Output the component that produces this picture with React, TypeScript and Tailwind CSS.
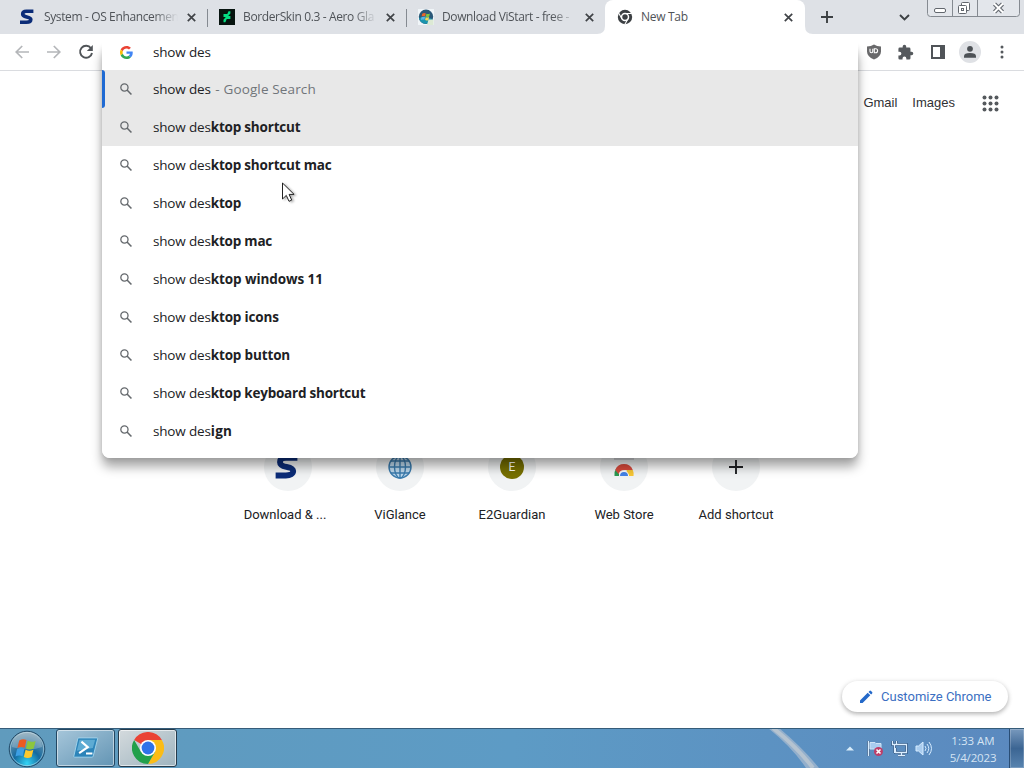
import type { ReactNode } from "react";

const suggestions = [
  { typed: "show des", rest: "ktop shortcut", tracking: "tracking-[-0.2px]" },
  { typed: "show des", rest: "ktop shortcut mac", tracking: "tracking-[-0.2px]" },
  { typed: "show des", rest: "ktop", tracking: "tracking-[-0.2px]" },
  { typed: "show des", rest: "ktop mac", tracking: "tracking-[-0.2px]" },
  { typed: "show des", rest: "ktop windows 11", tracking: "tracking-[-0.08px]" },
  { typed: "show des", rest: "ktop icons", tracking: "tracking-[-0.15px]" },
  { typed: "show des", rest: "ktop button", tracking: "tracking-[-0.15px]" },
  { typed: "show des", rest: "ktop keyboard shortcut", tracking: "tracking-[-0.22px]" },
  { typed: "show des", rest: "ign", tracking: "tracking-[0.3px]" },
];

function SLogo({ size }: { size: number }) {
  return (
    <svg width={size} height={size} viewBox="0 0 16 16" className="shrink-0">
      <path
        d="M14.4 2.3H7.4C5 2.3 3.7 3.3 3.7 5c0 1.9 1.5 2.4 4 2.9 2.5.5 4.1 1.1 4.1 2.6 0 1.6-1.7 2.7-4.5 2.7H1"
        fill="none"
        stroke="#0b2c78"
        strokeWidth="3.6"
      />
    </svg>
  );
}

function DeviantLogo() {
  return (
    <svg width="16" height="16" viewBox="0 0 16 16" className="shrink-0">
      <rect width="16" height="16" fill="#07140f" />
      <path
        d="M11.4 2.2v2.4L9.2 7h2.2v3H7.7l-1.3 3.2H4.5v-2.5L6.8 8H4.5V5h3.8l1.2-2.8Z"
        fill="#06dd83"
      />
    </svg>
  );
}

function ViStartLogo() {
  return (
    <svg width="16" height="16" viewBox="0 0 16 16" className="shrink-0">
      <rect width="16" height="16" fill="#f0f5f8" />
      <circle cx="8" cy="7.8" r="7.2" fill="#2b5878" />
      <path d="M1 9a7.2 7.2 0 0 0 13.7 1.3L8 7Z" fill="#1994ae" />
      <path d="M4.2 4.8q1.8-1.2 3.6-.3L7.2 7.4q-1.8-.8-3.6.2Z" fill="#e9652b" />
      <path d="M8.4 4.7q1.8.7 3.5-.2l-.7 2.9q-1.7.9-3.4.2Z" fill="#83c341" />
      <path d="M3.4 8.2q1.8-1 3.6-.2l-.6 2.8q-1.8-.8-3.5.2Z" fill="#58b5e8" />
      <path d="M7.7 8.3q1.7.7 3.4-.2l-.6 2.8q-1.7.9-3.4.2Z" fill="#f6d553" />
      <path d="M10.5 10.5h5V16H9Z" fill="#dce9d4" />
    </svg>
  );
}

function ChromeMono() {
  return (
    <svg width="16" height="16" viewBox="0 0 16 16" className="shrink-0">
      <circle cx="8" cy="8" r="7.2" fill="#3c4043" />
      <g stroke="#fff" strokeWidth="1.1" fill="none">
        <circle cx="8" cy="8" r="3.5" strokeWidth="1.5" />
        <path d="M8 4.5h6.8M4.97 9.75 1.6 3.9M11.03 9.75l-3.4 5.9" />
      </g>
    </svg>
  );
}

function ChromeColor({ size }: { size: number }) {
  return (
    <svg width={size} height={size} viewBox="0 0 48 48" className="shrink-0">
      <path d="M24 24 3.2 12A24 24 0 0 1 44.8 12Z" fill="#ea4335" />
      <path d="M24 12h20.8A24 24 0 0 1 24 48l10.4-18Z" fill="#fbbc16" />
      <path d="M3.2 12A24 24 0 0 0 24 48l10.4-18H13.6Z" fill="#22a04b" />
      <circle cx="24" cy="24" r="12" fill="#fff" />
      <circle cx="24" cy="24" r="9.6" fill="#2f73e8" />
    </svg>
  );
}

function GoogleG() {
  return (
    <svg width="13" height="13" viewBox="0 0 48 48" className="shrink-0">
      <path fill="#EA4335" d="M24 9.5c3.5 0 6.7 1.2 9.2 3.6l6.9-6.9C35.9 2.4 30.5 0 24 0 14.6 0 6.5 5.4 2.6 13.2l8 6.2C12.4 13.7 17.7 9.5 24 9.5z" />
      <path fill="#4285F4" d="M47 24.6c0-1.6-.2-3.1-.4-4.6H24v9h12.9c-.6 3-2.3 5.5-4.8 7.2l7.7 6C44.4 38 47 31.8 47 24.6z" />
      <path fill="#FBBC05" d="M10.5 28.6c-.5-1.5-.8-3-.8-4.6s.3-3.1.8-4.6l-8-6.2C.9 16.5 0 20.1 0 24s.9 7.5 2.6 10.8z" />
      <path fill="#34A853" d="M24 48c6.5 0 11.9-2.1 15.9-5.8l-7.7-6c-2.2 1.4-4.9 2.3-8.2 2.3-6.3 0-11.6-4.2-13.5-9.9l-8 6.2C6.5 42.6 14.6 48 24 48z" />
    </svg>
  );
}

function SearchIcon() {
  return (
    <svg width="12" height="12" viewBox="0 0 13 13" fill="none" stroke="#65696d" className="shrink-0">
      <circle cx="4.8" cy="4.8" r="3.9" strokeWidth="1.4" />
      <path d="m7.6 7.6 4.8 4.8" strokeWidth="1.7" />
    </svg>
  );
}

function CloseIcon() {
  return (
    <svg width="9" height="9" viewBox="0 0 9 9" stroke="#404347" strokeWidth="1.7" className="shrink-0">
      <path d="m.8.8 7.4 7.4M8.2.8.8 8.2" />
    </svg>
  );
}

function Tab({ icon, title, className, titleClass }: { icon: ReactNode; title: string; className: string; titleClass: string }) {
  return (
    <div className={`flex h-[34px] shrink-0 items-center ${className}`}>
      {icon}
      <span
        className={`w-[134px] whitespace-nowrap text-[12px] tracking-[-0.37px] text-[#4f5358] mask-r-from-82% mask-r-to-100% ${titleClass}`}
      >
        {title}
      </span>
      <span className="ml-[9px] flex">
        <CloseIcon />
      </span>
    </div>
  );
}

function TabStrip() {
  return (
    <div className="flex h-[34px] shrink-0 items-center bg-[#dee1e6]">
      <Tab icon={<SLogo size={16} />} title="System - OS Enhancemen" className="w-[198px] pl-[19px]" titleClass="ml-[9px]" />
      <Tab icon={<DeviantLogo />} title="BorderSkin 0.3 - Aero Gla" className="w-[199px] pl-[21px]" titleClass="ml-2" />
      <Tab icon={<ViStartLogo />} title="Download ViStart - free -" className="w-[208px] pl-[21px]" titleClass="ml-2" />
      <div className="relative flex h-[34px] w-[200px] shrink-0 items-center rounded-t-lg bg-white pl-3">
        <svg width="216" height="8" viewBox="0 0 216 8" className="absolute bottom-0 -left-2" fill="#fff">
          <path d="M0 8Q8 8 8 0v8ZM208 0q0 8 8 8h-8Z" />
        </svg>
        <ChromeMono />
        <span className="ml-2 text-[12px] tracking-[-0.3px] text-[#4f5358]">New Tab</span>
        <span className="mr-3 ml-auto">
          <CloseIcon />
        </span>
      </div>
      <svg width="12" height="12" viewBox="0 0 12 12" stroke="#3c4043" strokeWidth="1.9" className="ml-4 shrink-0">
        <path d="M6 0v12M0 6h12" />
      </svg>
      <svg width="11" height="7" viewBox="0 0 11 7" fill="none" stroke="#3c4043" strokeWidth="1.9" className="ml-[66px] shrink-0">
        <path d="m1 1 4.5 4.5L10 1" />
      </svg>
      <svg width="94" height="17" viewBox="0 0 94 17" fill="none" className="mr-[3px] ml-auto self-start">
        <path d="M.5 0v13.500q0 3 3 3h86q3 0 3-3V0M25.500 0v16.500M50.500 0v16.500" fill="#e3e6eb" stroke="#858a91" />
        <rect x="7.5" y="8.5" width="11" height="4" rx="1.5" fill="#fff" stroke="#62676e" />
        <rect x="34.5" y="2.5" width="8" height="8" rx="1" fill="#fff" stroke="#62676e" />
        <rect x="31.5" y="5.5" width="8" height="8" rx="1" fill="#fff" stroke="#62676e" />
        <rect x="34.5" y="8.5" width="2" height="2" stroke="#62676e" />
        <path d="m67.5 4 8 8m0-8-8 8" stroke="#62676e" strokeWidth="4.2" />
        <path d="m67 3.5 9 9m0-9-9 9" stroke="#fff" strokeWidth="2" />
      </svg>
    </div>
  );
}

function Toolbar() {
  return (
    <div className="flex h-[37px] shrink-0 items-center border-b border-[#dadce0] bg-white pl-[15px]">
      <svg width="14" height="14" viewBox="0 0 14 14" fill="none" stroke="#b4b6b9" strokeWidth="1.7">
        <path d="M14 7H1.5M7.2 1 1.2 7l6 6" />
      </svg>
      <svg width="14" height="14" viewBox="0 0 14 14" fill="none" stroke="#b4b6b9" strokeWidth="1.7" className="ml-[18px]">
        <path d="M0 7h12.5M6.8 1l6 6-6 6" />
      </svg>
      <svg width="16" height="16" viewBox="0 0 16 16" fill="none" className="ml-[17px]">
        <path d="M13 4.300A6 6 0 1 0 14 9" stroke="#505458" strokeWidth="1.9" />
        <path d="M14.8 1v6h-6Z" fill="#505458" />
      </svg>
      <div className="mr-[19px] ml-auto flex items-center">
        <svg width="16" height="16" viewBox="0 0 16 16">
          <path d="M8 .4q2.8 1.9 7 2.1v5q0 5-7 8.100-7-3.100-7-8.100v-5Q5.200 2.300 8 .4Z" fill="#69696b" />
          <path d="M4 4.800v2.500q0 1.500 1.400 1.500t1.400-1.500V4.800M8.300 4.800v4h1.300a2 2 0 0 0 0-4Z" fill="none" stroke="#fff" strokeWidth="1.1" />
        </svg>
        <svg width="17" height="17" viewBox="0 0 24 24" fill="#55595d" className="ml-[15px]">
          <path d="M20.5 11H19V7a2 2 0 0 0-2-2h-4V3.500a2.500 2.500 0 0 0-5 0V5H4a2 2 0 0 0-2 2v3.800h1.500a2.700 2.700 0 0 1 0 5.400H2V20a2 2 0 0 0 2 2h3.800v-1.500a2.700 2.700 0 0 1 5.400 0V22H17a2 2 0 0 0 2-2v-4h1.500a2.500 2.500 0 0 0 0-5Z" />
        </svg>
        <svg width="14" height="14" viewBox="0 0 14 14" className="ml-[17px]">
          <path d="M1 1h12v12H1Z" fill="#fff" stroke="#505458" strokeWidth="2" />
          <path d="M9 1h4v12H9Z" fill="#505458" />
        </svg>
        <svg width="22" height="22" viewBox="0 0 22 22" className="ml-[14px]">
          <circle cx="11" cy="11" r="11" fill="#dfe1e5" />
          <circle cx="11" cy="7.8" r="2.9" fill="#4d5156" />
          <path d="M5 16.800v-1.500Q5 12 11 12t6 3.300v1.500Z" fill="#4d5156" />
        </svg>
        <svg width="6" height="14" viewBox="0 0 6 14" fill="#55595d" className="ml-[18px]">
          <circle cx="3" cy="2" r="1.5" />
          <circle cx="3" cy="7" r="1.5" />
          <circle cx="3" cy="12" r="1.5" />
        </svg>
      </div>
    </div>
  );
}

function Shortcut({ label, children, shift = "" }: { label: string; children: ReactNode; shift?: string }) {
  return (
    <div className="flex w-28 flex-col items-center">
      <div className="flex size-12 items-center justify-center rounded-full bg-[#f1f3f4]">{children}</div>
      <span className={`mt-[14px] font-[Roboto,sans-serif] text-[13px] leading-5 whitespace-nowrap text-[#202124] ${shift}`}>
        {label}
      </span>
    </div>
  );
}

function NewTabPage() {
  return (
    <div className="flex flex-1 flex-col bg-white">
      <div className="flex h-16 items-center justify-end pr-[25px] font-['Liberation_Sans',Arial,sans-serif] text-[13px] text-[#303134]">
        <span>Gmail</span>
        <span className="ml-[15px]">Images</span>
        <svg width="17" height="17" viewBox="0 0 17 17" fill="#55595d" className="ml-[27px]">
          {[2.5, 8.5, 14.5].map((y) =>
            [2.5, 8.5, 14.5].map((x) => <circle key={`${x}-${y}`} cx={x} cy={y} r="2" />)
          )}
        </svg>
      </div>
      <div className="mt-[308px] ml-[232px] flex">
        <Shortcut label="Download & ..." shift="-ml-1.5">
          <span className="-ml-0.5 flex">
            <SLogo size={26} />
          </span>
        </Shortcut>
        <Shortcut label="ViGlance">
          <svg width="24" height="24" viewBox="0 0 24 24" fill="none" stroke="#3b7cae" strokeWidth="1.4">
            <circle cx="12" cy="12" r="11" fill="#bdd9ed" />
            <ellipse cx="12" cy="12" rx="5.5" ry="11" />
            <path d="M12 1v22M1 12h22M3 6h18M3 18h18" />
          </svg>
        </Shortcut>
        <Shortcut label="E2Guardian">
          <span className="flex size-6 items-center justify-center rounded-full bg-[#777000] font-[Roboto,sans-serif] text-[12px] text-white">
            E
          </span>
        </Shortcut>
        <Shortcut label="Web Store">
          <svg width="24" height="24" viewBox="0 0 24 24">
            <path d="M2 1h20v4H2Z" fill="#d1d3d6" />
            <path d="M2.5 21a9.5 9.5 0 0 1 1.7-7.500L8 21Z" fill="#2b9a51" />
            <path d="M3.2 15a9.500 9.500 0 0 1 17.600 0H12a6 6 0 0 0-5.400 4Z" fill="#d94b3d" />
            <path d="M14.5 15h6.300a10 10 0 0 1 .7 6H16Z" fill="#f8c735" />
            <path d="M7 21a5 5 0 0 1 10 0Z" fill="#fff" />
            <path d="M8 21a4 4 0 0 1 8 0Z" fill="#4482e8" />
          </svg>
        </Shortcut>
        <Shortcut label="Add shortcut">
          <svg width="14" height="14" viewBox="0 0 14 14" stroke="#202124" strokeWidth="1.9">
            <path d="M7 0v14M0 7h14" />
          </svg>
        </Shortcut>
      </div>
      <button className="mt-auto mr-4 mb-4 flex h-[31px] w-[166px] items-center self-end rounded-full bg-white pl-[17px] font-[Roboto,sans-serif] text-[13px] text-[#3b6fc2] shadow-[0_2px_4px_rgba(0,0,0,0.25),0_1px_6px_rgba(0,0,0,0.08)]">
        <svg width="14" height="14" viewBox="0 0 14 14" fill="#2469c9">
          <path d="M1 10.400 8.700 2.700l2.600 2.600L3.600 13H1ZM9.500 1.900l1-1q.8-.7 1.500 0l1.100 1.100q.7.700 0 1.400l-1 1.100Z" />
        </svg>
        <span className="ml-2">Customize Chrome</span>
      </button>
    </div>
  );
}

function Omnibox() {
  return (
    <div className="absolute top-9 left-[102px] h-[422px] w-[756px] overflow-hidden rounded-lg bg-white text-[13.5px] text-[#202124]">
      <div className="flex h-[34px] items-center pb-0.5 pl-[18px]">
        <GoogleG />
        <span className="ml-5 tracking-[-0.17px]">show des</span>
      </div>
      <div className="flex h-[38px] items-center bg-[#e8e8e8]">
        <span className="h-full w-[3px] rounded-r-sm bg-[#1f6ad3]" />
        <span className="ml-[15px] flex">
          <SearchIcon />
        </span>
        <span className="ml-[21px] whitespace-pre tracking-[-0.17px]">
          show des
          <span className="ml-px tracking-[0.13px] text-[#70757a]"> - Google Search</span>
        </span>
      </div>
      {suggestions.map((s, i) => (
        <div key={s.rest} className={`flex h-[38px] items-center pl-[18px] ${i === 0 ? "bg-[#e8e8e8]" : ""}`}>
          <SearchIcon />
          <span className="ml-[21px] whitespace-pre tracking-[-0.17px]">
            {s.typed}
            <b className={s.tracking}>{s.rest}</b>
          </span>
        </div>
      ))}
    </div>
  );
}

function StartOrb() {
  return (
    <svg width="38" height="38" viewBox="0 0 38 38" className="ml-2 shrink-0">
      <defs>
        <radialGradient id="orb" cx="50%" cy="90%" r="85%">
          <stop offset="0" stopColor="#32d4f5" />
          <stop offset=".45" stopColor="#14699f" />
          <stop offset="1" stopColor="#7f9fb1" />
        </radialGradient>
      </defs>
      <circle cx="19" cy="19" r="17.8" fill="url(#orb)" stroke="#244c6a" />
      <circle cx="19" cy="19" r="16.6" fill="none" stroke="#b9dcea" strokeOpacity=".6" />
      <path d="M4 17a15 15 0 0 1 30 0q-14 5-30 0Z" fill="#fff" fillOpacity=".23" />
      <path d="M11.2 10.4q4-2.2 7.3-.3l-1.8 7.7q-3.5-1.8-7.3.2Z" fill="#ed5a22" />
      <path d="M19.7 10.8q3.5 2 7.9.2l-1.9 7.5q-4.1 2-7.8-.1Z" fill="#8cc63f" />
      <path d="M9 19.3q3.9-2 7.4-.2l-1.8 7.2q-3.4-1.9-7.2.3Z" fill="#3d9fe4" />
      <path d="M17.6 19.7q3.7 2 7.8.1l-1.8 7.3q-4.1 2-7.8-.1Z" fill="#fdc92e" />
    </svg>
  );
}

function Taskbar() {
  return (
    <div className="relative flex h-10 shrink-0 items-center overflow-hidden border-t border-[#365c79] bg-linear-to-r from-[#609bbd] via-[#5d9bc5] to-[#5b89bf]">
      <svg width="70" height="40" viewBox="0 0 70 40" className="absolute -top-px left-[763px]">
        <path d="M5 0h11Q39 19 56 40H43Q29 19 5 0Z" fill="#a5b9cf" fillOpacity=".75" />
        <path d="M10 0Q34 19 50 40" stroke="#ccd0d2" strokeOpacity=".6" strokeWidth="4" fill="none" />
      </svg>
      <StartOrb />
      <div className="mb-px ml-[10px] flex h-[38px] w-[59px] items-center justify-center rounded-[3px] border border-[#234762] bg-linear-to-br from-[#a6c6da] to-[#6395b4] inset-ring inset-ring-white/50">
        <svg width="26" height="22" viewBox="0 0 28 24">
          <path d="M6 1h20q1 0 .7 1l-4.9 19q-.2 1-1.2 1H1.500q-1 0-.8-1L5 2q.2-1 1-1Z" fill="#2d84b9" stroke="#a4d5ec" />
          <path d="M7 3h17l-2.5 9L4 15Z" fill="#5eabd3" />
          <path d="m9 5 7 6-9.5 6.500M14 18h7" fill="none" stroke="#fff" strokeWidth="2.3" />
        </svg>
      </div>
      <div className="mb-px ml-[3px] flex h-[38px] w-[59px] items-center justify-center rounded-[3px] border border-[#263b4b] bg-linear-to-br from-[#d4dadd] to-[#9eb4bf] inset-ring inset-ring-white/60">
        <ChromeColor size={32} />
      </div>
      <div className="ml-auto flex h-full items-center">
        <svg width="8" height="5" viewBox="0 0 8 5" className="mr-[13px]">
          <path d="m0 4.500 4-4 4 4Z" fill="#d8ecfa" />
        </svg>
        <svg width="17" height="17" viewBox="0 0 17 17">
          <path d="M1.5 1v15" stroke="#274c79" strokeWidth="3" />
          <path d="M1.5 1v15" stroke="#d8edff" strokeWidth="1.6" />
          <path d="M3 2.500h5l1 1h5V10H9L8 9H3Z" fill="#a9cdf0" stroke="#cfe4f7" />
          <circle cx="11.5" cy="11.5" r="4.5" fill="#bd3e69" />
          <path d="m9.5 9.500 4 4m0-4-4 4" stroke="#fff" strokeWidth="1.6" />
        </svg>
        <svg width="17" height="17" viewBox="0 0 17 17" fill="none" className="ml-[7px]">
          <path d="M6 4.500h9.500v8H4.500V8M7 15.500h7M10.500 13v2M1.500 1v3.500h4V1M3.500 4.500V13" stroke="#274c79" strokeWidth="2.6" />
          <path d="M6 4.500h9.500v8H4.500V8M7 15.500h7M10.500 13v2M1.500 1v3.500h4V1M3.500 4.500V13" stroke="#dceeff" strokeWidth="1.3" />
        </svg>
        <svg width="17" height="17" viewBox="0 0 17 17" fill="none" stroke="#d5ebff" className="ml-[7px]">
          <path d="M1 6h2.500L8 2v13l-4.500-4H1Z" fill="#a9ccef" />
          <path d="M10 6q2 2.500 0 5M12 4q3.500 4.500 0 9M14 2q5 6.500 0 13" />
        </svg>
        <div className="ml-[14px] w-[54px] text-center text-[11.5px] leading-[17px] whitespace-nowrap text-[#d5e4f3]">
          <p>1:33 AM</p>
          <p className="tracking-[-0.15px]">5/4/2023</p>
        </div>
        <div className="ml-[9px] h-full w-[15px] border-l border-[#294d75] bg-linear-to-b from-[#7899bd] via-[#3c6593] to-[#5884b0] inset-ring inset-ring-white/20" />
      </div>
    </div>
  );
}

export default function App() {
  return (
    <div className="relative flex h-[768px] w-[1024px] flex-col overflow-hidden bg-white font-['Open_Sans','Noto_Sans',sans-serif]">
      <TabStrip />
      <div className="absolute top-[9px] left-[207px] h-[18px] w-px bg-[#858a91]" />
      <div className="absolute top-[9px] left-[406px] h-[18px] w-px bg-[#858a91]" />
      <Toolbar />
      <NewTabPage />
      <Taskbar />
      <div className="absolute top-11 left-[102px] h-[414px] w-[756px] rounded-lg shadow-[0_9px_11px_rgba(0,0,0,0.34),0_1px_5px_rgba(0,0,0,0.12)]" />
      <Omnibox />
      <svg width="16" height="22" viewBox="0 0 16 22" className="absolute top-[182px] left-[281px] drop-shadow-[2px_1px_1px_rgba(0,0,0,0.3)]">
        <path d="M1.5 1v16l3.800-3.600L8 19.300l2.700-1.200-2.600-5.700h5Z" fill="#fff" stroke="#222" />
      </svg>
    </div>
  );
}
